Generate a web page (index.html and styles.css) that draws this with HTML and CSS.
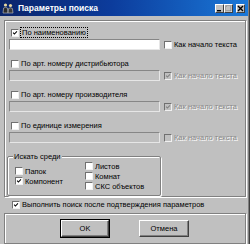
FILE: index.html
```html
<!DOCTYPE html>
<html lang="ru">
<head>
    <meta charset="utf-8">
    <meta name="viewport" content="width=device-width, initial-scale=1.0">
    <title>Параметры поиска</title>
    <link rel="stylesheet" href="styles.css">
</head>
<body>

    <div class="window">
        <div class="titlebar">
            <svg class="title-icon" width="12" height="12" viewBox="0 0 12 12">
                <circle cx="3.5" cy="3" r="1.6" fill="#e8d8a0"/>
                <path d="M1 11 L1.6 6 Q3.5 4.6 5.4 6 L6 11 Z" fill="#2a2a2a" stroke="#c8c8c8" stroke-width="0.6"/>
                <circle cx="8.5" cy="3.5" r="1.6" fill="#e8d8a0"/>
                <path d="M6 11 L6.6 6.5 Q8.5 5 10.4 6.5 L11 11 Z" fill="#3a3a3a" stroke="#c8c8c8" stroke-width="0.6"/>
            </svg>
            <div class="title">Параметры поиска</div>
            <div class="caption-btn">
                <svg width="7" height="7" viewBox="0 0 7 7"><rect x="1" y="5" width="4" height="1.4" fill="#000"/></svg>
            </div>
            <div class="caption-btn">
                <svg width="7" height="7" viewBox="0 0 7 7"><rect x="1.5" y="1.5" width="5" height="5" fill="none" stroke="#fff" stroke-width="1"/><rect x="1" y="1" width="5" height="5" fill="none" stroke="#808080" stroke-width="1"/></svg>
            </div>
            <div class="caption-btn close">
                <svg width="7" height="7" viewBox="0 0 7 7"><path d="M1 1 L6 6 M6 1 L1 6" stroke="#000" stroke-width="1.4"/></svg>
            </div>
        </div>

        <div class="panel etched main">
            <div class="field">
                <div class="option">
                    <span class="box checked"><svg viewBox="0 0 8 8"><path d="M1.5 3.6 L3.2 5.4 L6.6 1.8" fill="none" stroke="#000" stroke-width="1.4"/></svg></span>
                    <span class="focus">По наименованию</span>
                </div>
                <div class="entry">
                    <div class="input"></div>
                    <div class="option side">
                        <span class="box"></span>
                        <span>Как начало текста</span>
                    </div>
                </div>
            </div>

            <div class="field">
                <div class="option">
                    <span class="box"></span>
                    <span>По арт. номеру дистрибьютора</span>
                </div>
                <div class="entry">
                    <div class="input disabled"></div>
                    <div class="option side disabled">
                        <span class="box checked"><svg viewBox="0 0 8 8"><path d="M1.5 3.6 L3.2 5.4 L6.6 1.8" fill="none" stroke="#808080" stroke-width="1.4"/></svg></span>
                        <span>Как начало текста</span>
                    </div>
                </div>
            </div>

            <div class="field">
                <div class="option">
                    <span class="box"></span>
                    <span>По арт. номеру производителя</span>
                </div>
                <div class="entry">
                    <div class="input disabled"></div>
                    <div class="option side disabled">
                        <span class="box checked"><svg viewBox="0 0 8 8"><path d="M1.5 3.6 L3.2 5.4 L6.6 1.8" fill="none" stroke="#808080" stroke-width="1.4"/></svg></span>
                        <span>Как начало текста</span>
                    </div>
                </div>
            </div>

            <div class="field">
                <div class="option">
                    <span class="box"></span>
                    <span>По единице измерения</span>
                </div>
                <div class="entry">
                    <div class="input disabled"></div>
                    <div class="option side disabled">
                        <span class="box"></span>
                        <span>Как начало текста</span>
                    </div>
                </div>
            </div>

            <div class="group etched">
                <div class="group-title">Искать среди</div>
                <div class="group-cols">
                    <div class="col left">
                        <div class="option">
                            <span class="box"></span>
                            <span>Папок</span>
                        </div>
                        <div class="option">
                            <span class="box checked"><svg viewBox="0 0 8 8"><path d="M1.5 3.6 L3.2 5.4 L6.6 1.8" fill="none" stroke="#000" stroke-width="1.4"/></svg></span>
                            <span>Компонент</span>
                        </div>
                    </div>
                    <div class="col">
                        <div class="option">
                            <span class="box"></span>
                            <span>Листов</span>
                        </div>
                        <div class="option">
                            <span class="box"></span>
                            <span>Комнат</span>
                        </div>
                        <div class="option">
                            <span class="box"></span>
                            <span>СКС объектов</span>
                        </div>
                    </div>
                </div>
            </div>
        </div>

        <div class="option run">
            <span class="box checked"><svg viewBox="0 0 8 8"><path d="M1.5 3.6 L3.2 5.4 L6.6 1.8" fill="none" stroke="#000" stroke-width="1.4"/></svg></span>
            <span>Выполнить поиск после подтверждения параметров</span>
        </div>

        <div class="panel etched buttons">
            <div class="button default">OK</div>
            <div class="button">Отмена</div>
        </div>
    </div>

</body>
</html>
```

FILE: styles.css
```css
* {
    box-sizing: border-box;
}

html, body {
    margin: 0;
    overflow: hidden;
    background: #c0c0c0;
}

body {
    font-family: "Liberation Sans", Arial, sans-serif;
    font-size: 7.5px;
    color: #000;
}

.window {
    width: 250px;
    height: 244px;
    padding-right: 2px;
    display: flex;
    flex-direction: column;
    box-shadow: inset -1px 0 #404040, inset -2px 0 #808080;
}

/* Заголовок окна */
.titlebar {
    height: 16px;
    flex: none;
    display: flex;
    align-items: center;
    padding: 0 3px 0 2px;
    background: linear-gradient(90deg, #0a246a 0%, #0c3c9c 45%, #1a78d8 100%);
    color: #fff;
    font-weight: bold;
    font-size: 8.5px;
}

.title-icon {
    width: 12px;
    height: 12px;
    margin-right: 4px;
}

.title {
    flex: 1;
}

.caption-btn {
    width: 9px;
    height: 9px;
    display: flex;
    align-items: center;
    justify-content: center;
    background: #c0c0c0;
    border: 1px solid;
    border-color: #fff #404040 #404040 #fff;
}

.caption-btn svg {
    width: 7px;
    height: 7px;
}

.caption-btn.close {
    margin-left: 3px;
}

.etched {
    border: 1px solid #808080;
    box-shadow: inset 1px 1px #fff, 1px 1px #fff;
}

.panel {
    margin: 0 2px 0 4px;
}

.main {
    margin-top: 4px;
    height: 177px;
    flex: none;
    padding-top: 7px;
    display: flex;
    flex-direction: column;
}

.field {
    display: flex;
    flex-direction: column;
    gap: 2px;
    margin-bottom: 9px;
}

.option {
    display: flex;
    align-items: center;
    gap: 2px;
    height: 9px;
    line-height: 9px;
    white-space: nowrap;
}

.field > .option {
    margin-left: 6px;
}

.entry {
    display: flex;
    align-items: center;
    gap: 4px;
    height: 11px;
    padding-left: 4px;
}

.input {
    width: 151px;
    height: 11px;
    background: #fff;
    border: 1px solid;
    border-color: #868686 #e6e6e6 #e6e6e6 #868686;
}

.input.disabled {
    background: #c0c0c0;
}

.box {
    width: 8px;
    height: 8px;
    flex: none;
    background: #fff;
    border: 1px solid;
    border-color: #707070 #f0f0f0 #f0f0f0 #707070;
    display: flex;
}

.box svg {
    width: 6px;
    height: 6px;
}

.disabled .box {
    background: #c0c0c0;
}

.disabled span {
    color: #8a8a8a;
    text-shadow: 1px 1px #fff;
}

.focus {
    outline: 1px dotted #000;
    padding: 0 1px;
}

/* Группа "Искать среди" */
.group {
    width: 154px;
    height: 40px;
    margin: 4px 0 0 2px;
    padding-left: 5px;
    border-radius: 2px;
}

.group-title {
    width: fit-content;
    margin-top: -5px;
    padding: 0 1px;
    line-height: 9px;
    background: #c0c0c0;
}

.group-cols {
    display: flex;
    align-items: center;
}

.col {
    display: flex;
    flex-direction: column;
}

.col .option {
    height: 10px;
}

.col.left {
    width: 70px;
    margin-left: 2px;
}

.run {
    margin: 3px 0 4px 12px;
}

/* Кнопки */
.buttons {
    flex: 1;
    padding-top: 6px;
    display: flex;
    justify-content: center;
    align-items: flex-start;
    gap: 30px;
}

.button {
    width: 50px;
    height: 17px;
    display: flex;
    align-items: center;
    justify-content: center;
    background: #c0c0c0;
    border: 1px solid;
    border-color: #fff #404040 #404040 #fff;
    box-shadow: inset -1px -1px #808080;
}

.button.default {
    width: 48px;
    outline: 1px solid #000;
    outline-offset: 0;
}
```
